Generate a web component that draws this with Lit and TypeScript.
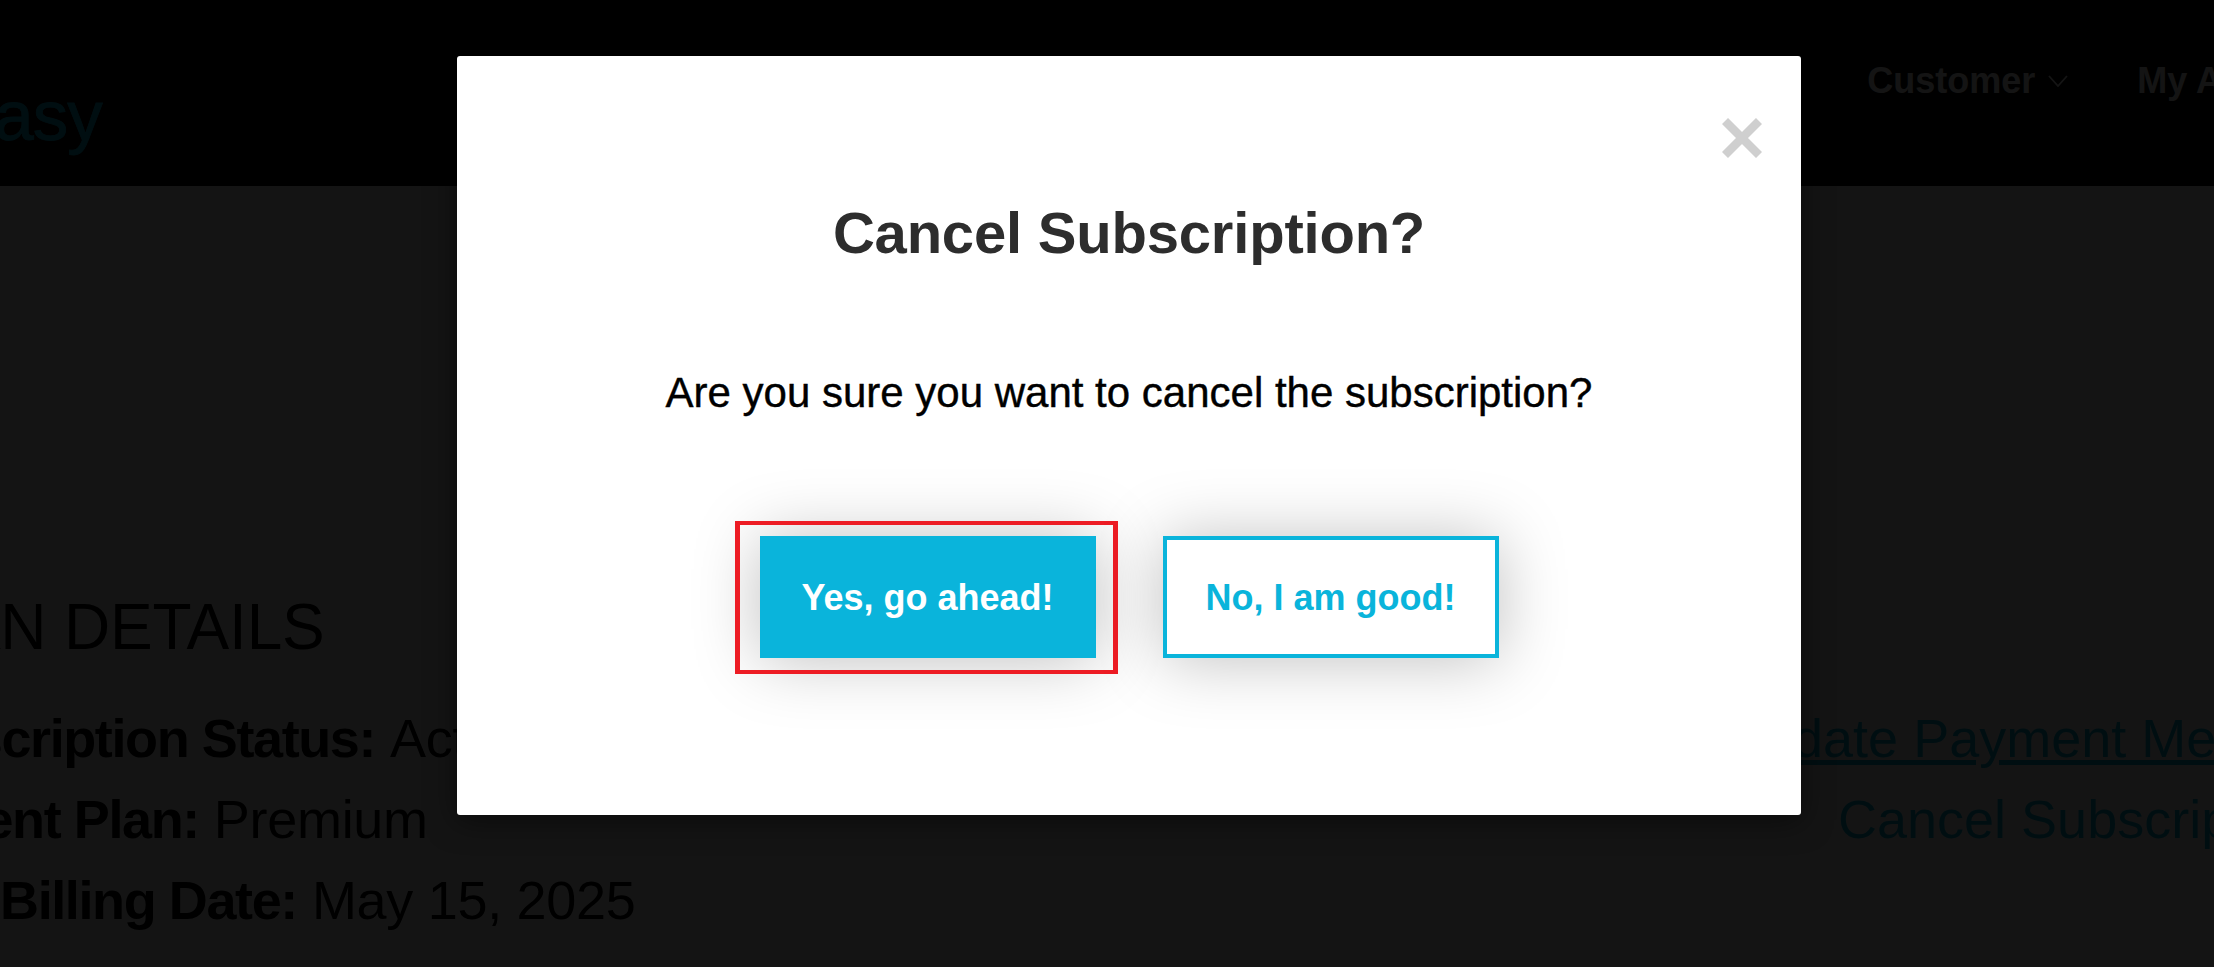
import { LitElement, html, css } from "lit";
import { customElement } from "lit/decorators.js";

@customElement("app-root")
export class AppRoot extends LitElement {
  static styles = css`
    :host {
      display: block;
      position: relative;
      width: 100%;
      height: 100vh;
      overflow: hidden;
      background: #fff;
      font-family: "Liberation Sans", Arial, sans-serif;
      color: #000;
    }
    .header {
      height: 186px;
      background: #000;
      display: flex;
      align-items: flex-start;
      white-space: nowrap;
    }
    .logo {
      margin: 76px 0 0 -52px;
      font-size: 71px;
      line-height: 80px;
      letter-spacing: -1px;
      color: #0ab4db;
      -webkit-text-stroke: 0.8px #0ab4db;
    }
    .nav {
      margin-left: auto;
      margin-right: -126px;
      padding-top: 59px;
      display: flex;
      gap: 69px;
      font-size: 36px;
      line-height: 44px;
      font-weight: 700;
      color: #fff;
    }
    .nav-item { display: flex; align-items: center; gap: 13px; }
    .nav-item svg { width: 20px; height: 12px; }
    .main {
      display: flex;
      white-space: nowrap;
      font-size: 54px;
      line-height: 81px;
    }
    .details { margin-left: -125px; padding-top: 403px; width: 1849px; flex: none; }
    .details h2 {
      margin: 0 0 33px 5px;
      font-size: 64px;
      line-height: 76px;
      font-weight: 400;
      letter-spacing: -0.2px;
    }
    .row { height: 81px; }
    .row b { font-weight: 700; letter-spacing: -1.4px; }
    .row span { letter-spacing: -0.3px; }
    .actions { padding-top: 512px; }
    .actions a { color: #0ab4db; display: block; height: 81px; }
    .actions .cancel { text-decoration: none; margin-left: 114px; }
    .overlay {
      position: absolute;
      inset: 0;
      background: rgba(0, 0, 0, 0.92);
      display: flex;
      align-items: flex-start;
      padding: 56px 0 0 457px;
    }
    .modal {
      position: relative;
      width: 1344px;
      height: 759px;
      box-sizing: border-box;
      background: #fff;
      border-radius: 3px;
      box-shadow: 0 5px 30px rgba(0, 0, 0, 0.5);
      display: flex;
      flex-direction: column;
      align-items: center;
      padding-top: 142px;
      text-align: center;
    }
    .close {
      position: absolute;
      top: 62px;
      right: 39px;
      width: 40px;
      height: 40px;
      display: block;
    }
    h1 {
      margin: 0;
      font-size: 58px;
      line-height: 70px;
      font-weight: 700;
      letter-spacing: -0.2px;
      color: #2d2d2d;
    }
    p {
      margin: 102px 0 0;
      font-size: 42px;
      line-height: 46px;
      color: #000;
      -webkit-text-stroke: 0.4px #000;
    }
    .buttons {
      margin-top: 120px;
      display: flex;
      gap: 67px;
    }
    .btn {
      position: relative;
      box-sizing: border-box;
      width: 336px;
      height: 122px;
      padding-top: 2px;
      display: flex;
      align-items: center;
      justify-content: center;
      font-size: 36px;
      font-weight: 700;
      box-shadow: 0 2px 66px rgba(0, 0, 0, 0.25);
    }
    .yes { background: #0ab4db; color: #fff; }
    .no { background: #fff; color: #0ab4db; border: 4px solid #0ab4db; }
    .mark {
      position: absolute;
      inset: -15px -22px -16px -25px;
      border: 4px solid #ed1c24;
      border-left-width: 5px;
      border-right-width: 5px;
    }
  `;

  render() {
    return html`
      <div class="header">
        <div class="logo">Easy</div>
        <div class="nav">
          <div class="nav-item">
            Customer
            <svg viewBox="0 0 20 12" fill="none" stroke="currentColor" stroke-width="1.8">
              <path d="M1 1l9 10 9-10" />
            </svg>
          </div>
          <div class="nav-item">My Account</div>
        </div>
      </div>
      <div class="main">
        <div class="details">
          <h2>PLAN DETAILS</h2>
          <div class="row"><b>Subscription Status:</b> <span>Active</span></div>
          <div class="row"><b>Current Plan:</b> <span>Premium</span></div>
          <div class="row"><b>Next Billing Date:</b> <span>May 15, 2025</span></div>
        </div>
        <div class="actions">
          <a href="#">Update Payment Method</a>
          <a href="#" class="cancel">Cancel Subscription</a>
        </div>
      </div>
      <div class="overlay">
        <div class="modal">
          <svg class="close" viewBox="0 0 40 40" stroke="#cfcfcf" stroke-width="8.5">
            <path d="M3 3l34 34M37 3L3 37" />
          </svg>
          <h1>Cancel Subscription?</h1>
          <p>Are you sure you want to cancel the subscription?</p>
          <div class="buttons">
            <div class="btn yes">Yes, go ahead!<span class="mark"></span></div>
            <div class="btn no">No, I am good!</div>
          </div>
        </div>
      </div>
    `;
  }
}
